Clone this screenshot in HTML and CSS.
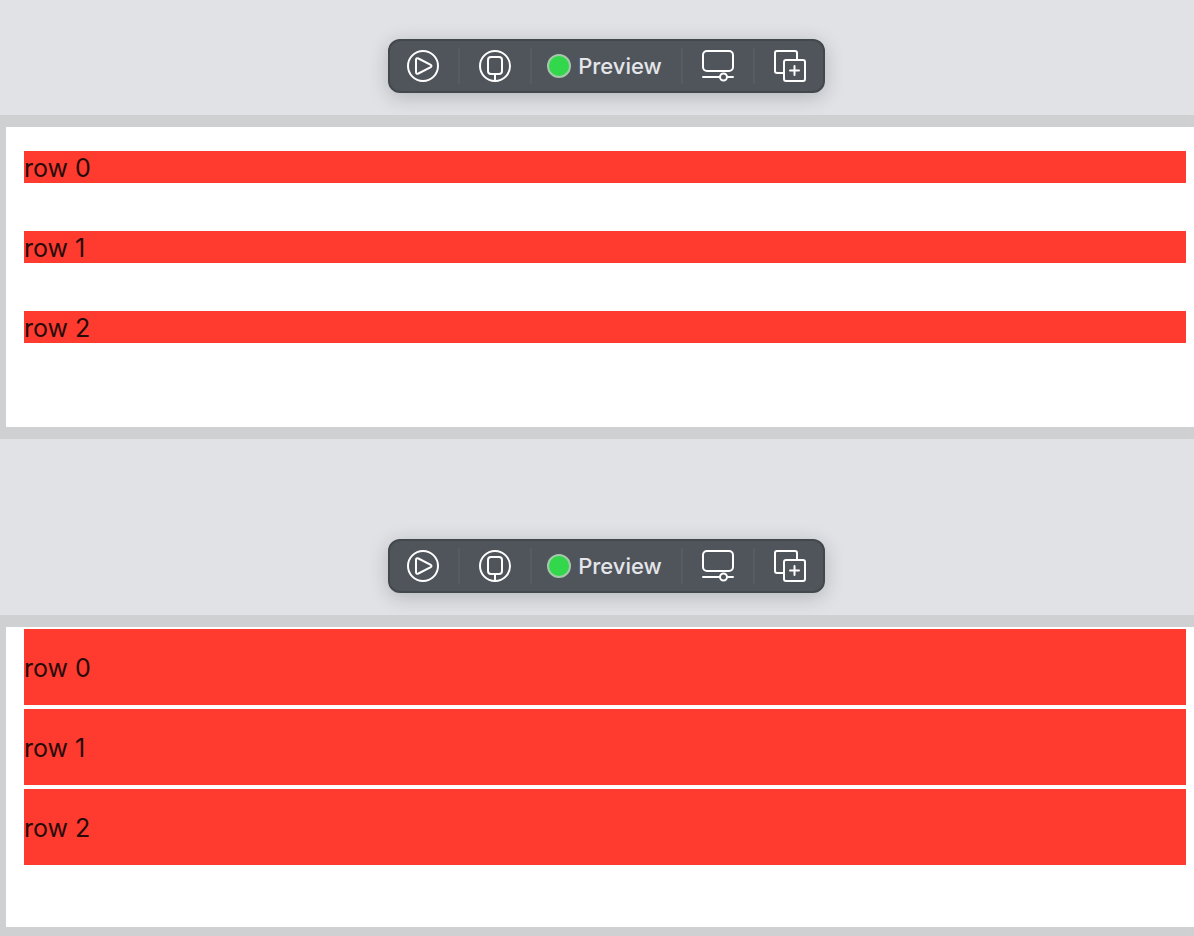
FILE: index.html
```
<!DOCTYPE html>
<html lang="en">
<head>
  <meta charset="UTF-8">
  <meta name="viewport" content="width=device-width, initial-scale=1.0">
  <title>Preview</title>
  <link rel="stylesheet" href="styles.css">
</head>
<body>
  <!-- icons shared by both toolbars -->
  <svg class="sprite" aria-hidden="true">
    <symbol id="icon-play" viewBox="0 0 32 32">
      <circle cx="16" cy="16" r="15"/>
      <path d="M9 10v12q0 2.600 2.400 1.500L23.300 17.400q2.400-1.400 0-2.800L11.400 8.500Q9 7.400 9 10z"/>
    </symbol>
    <symbol id="icon-device" viewBox="0 0 32 32">
      <circle cx="16" cy="16" r="15"/>
      <rect x="9" y="7" width="14" height="17" rx="3"/>
      <path d="M16 24v7"/>
    </symbol>
    <symbol id="icon-settings" viewBox="0 0 32 32">
      <rect x="1" y="1" width="30" height="20" rx="4"/>
      <path d="M1 27h17M25 27h6"/>
      <circle cx="21.500" cy="27" r="3.500"/>
    </symbol>
    <symbol id="icon-duplicate" viewBox="0 0 32 32">
      <path d="M9 23H3a2 2 0 0 1-2-2V3a2 2 0 0 1 2-2h18a2 2 0 0 1 2 2v6"/>
      <rect x="10" y="10" width="21" height="21" rx="2"/>
      <path d="M20.500 16v9M16 20.500h9"/>
    </symbol>
  </svg>

  <section class="preview">
    <div class="toolbar">
      <button class="tool" aria-label="Live preview"><svg class="icon"><use href="#icon-play"/></svg></button>
      <button class="tool" aria-label="Preview on device"><svg class="icon"><use href="#icon-device"/></svg></button>
      <button class="tool tool-name"><span class="dot"></span>Preview</button>
      <button class="tool" aria-label="Inspect preview"><svg class="icon"><use href="#icon-settings"/></svg></button>
      <button class="tool" aria-label="Duplicate preview"><svg class="icon"><use href="#icon-duplicate"/></svg></button>
    </div>
    <div class="canvas">
      <ul class="list">
        <li class="row">row 0</li>
        <li class="row">row 1</li>
        <li class="row">row 2</li>
      </ul>
    </div>
  </section>

  <section class="preview">
    <div class="toolbar">
      <button class="tool" aria-label="Live preview"><svg class="icon"><use href="#icon-play"/></svg></button>
      <button class="tool" aria-label="Preview on device"><svg class="icon"><use href="#icon-device"/></svg></button>
      <button class="tool tool-name"><span class="dot"></span>Preview</button>
      <button class="tool" aria-label="Inspect preview"><svg class="icon"><use href="#icon-settings"/></svg></button>
      <button class="tool" aria-label="Duplicate preview"><svg class="icon"><use href="#icon-duplicate"/></svg></button>
    </div>
    <div class="canvas">
      <ul class="list list-filled">
        <li class="row">row 0</li>
        <li class="row">row 1</li>
        <li class="row">row 2</li>
      </ul>
    </div>
  </section>
</body>
</html>
```
FILE: styles.css
```
* {
  box-sizing: border-box;
}
body {
  margin: 0;
  background-color: #e1e2e6;
  font-family: Inter, "Liberation Sans", sans-serif;
}
.sprite {
  display: none;
}
.preview {
  display: flex;
  flex-direction: column;
  align-items: center;
  padding-top: 39px;
}
.preview + .preview {
  padding-top: 100px;
}
.toolbar {
  display: flex;
  align-items: center;
  height: 54px;
  margin-left: 19px;
  margin-bottom: 22px;
  border: 2px solid #43484d;
  border-radius: 12px;
  background-color: #50555c;
  box-shadow: 0 4px 20px rgba(0, 0, 0, 0.2);
}
.tool {
  display: flex;
  align-items: center;
  height: 36px;
  padding: 0 19px;
  border: 0;
  border-left: 2px solid #575b62;
  background: none;
  color: #e4e6ea;
  font-family: inherit;
  font-size: 22px;
  font-weight: 500;
  cursor: pointer;
}
.tool:first-child {
  padding-left: 17px;
  border-left: 0;
}
.tool:last-child {
  padding-right: 17px;
}
.tool-name {
  padding: 0 19px 0 15px;
}
.dot {
  width: 24px;
  height: 24px;
  margin-right: 7px;
  border: 2px solid #a3c8aa;
  border-radius: 50%;
  background-color: #32d74b;
}
.icon {
  width: 32px;
  height: 32px;
  fill: none;
  stroke: #fff;
  stroke-width: 2;
  stroke-linecap: round;
  stroke-linejoin: round;
}
.canvas {
  width: 100%;
  min-height: 324px;
  padding: 0 8px 0 18px;
  border: solid #cfd0d1;
  border-width: 12px 0 12px 6px;
  background-color: #fff;
}
.list {
  display: flex;
  flex-direction: column;
  gap: 48px;
  margin: 0;
  padding: 24px 0 0;
  list-style: none;
}
.row {
  padding-top: 2px;
  background-color: #ff3b30;
  color: #280a08;
  font-size: 25px;
  line-height: 30px;
}
.list-filled {
  gap: 4px;
  padding-top: 2px;
}
.list-filled .row {
  padding: 24px 0 22px;
}
```
